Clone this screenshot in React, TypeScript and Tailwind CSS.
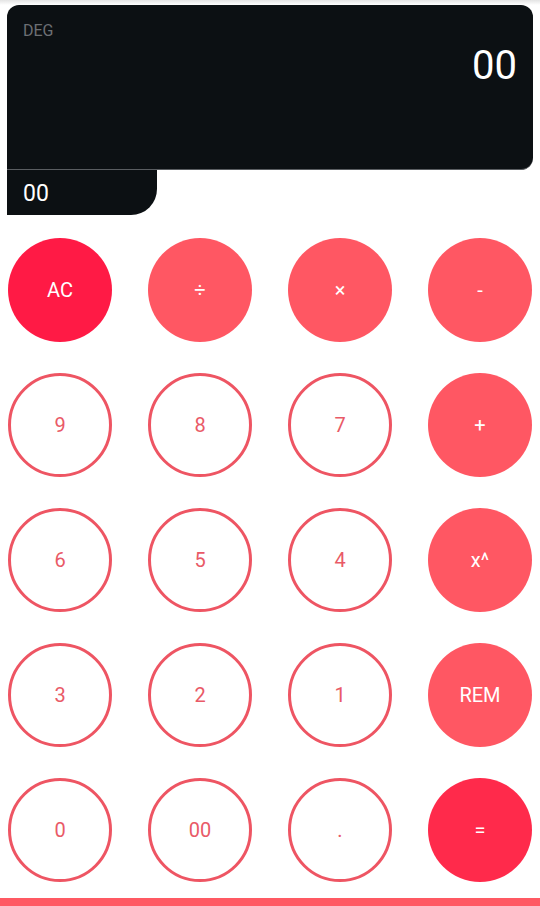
type Key = {
  label: string;
  kind: "clear" | "op" | "num" | "equals";
};

const keys: Key[] = [
  { label: "AC", kind: "clear" },
  { label: "÷", kind: "op" },
  { label: "×", kind: "op" },
  { label: "-", kind: "op" },
  { label: "9", kind: "num" },
  { label: "8", kind: "num" },
  { label: "7", kind: "num" },
  { label: "+", kind: "op" },
  { label: "6", kind: "num" },
  { label: "5", kind: "num" },
  { label: "4", kind: "num" },
  { label: "x^", kind: "op" },
  { label: "3", kind: "num" },
  { label: "2", kind: "num" },
  { label: "1", kind: "num" },
  { label: "REM", kind: "op" },
  { label: "0", kind: "num" },
  { label: "00", kind: "num" },
  { label: ".", kind: "num" },
  { label: "=", kind: "equals" },
];

const keyStyles: Record<Key["kind"], string> = {
  clear: "bg-[#ff1a45] text-white",
  op: "bg-[#ff5763] text-white",
  equals: "bg-[#ff2a4b] text-white",
  num: "border-[3px] border-[#ee5563] bg-white text-[#e95a67]",
};

const CalcKey = ({ label, kind }: Key) => {
  return (
    <button
      className={`flex size-[104px] items-center justify-center rounded-full text-[20px] ${keyStyles[kind]}`}
    >
      {label}
    </button>
  );
};

export default function App() {
  return (
    <div className="relative flex h-[906px] w-[540px] flex-col overflow-hidden bg-white font-['Roboto',sans-serif]">
      <div className="pointer-events-none absolute inset-x-0 top-0 h-[5px] bg-gradient-to-b from-[#e4e4e4] to-white" />

      <div className="mx-[7px] mt-[5px] flex flex-col">
        <div className="flex h-[165px] flex-col rounded-[12px] rounded-bl-none border-b border-[#5a5d61] bg-[#0c1013] px-4 pt-[16px]">
          <span className="text-[16px] leading-[20px] text-[#6c6f73]">DEG</span>
          <span className="mt-[5px] self-end text-[40px] leading-[40px] text-white">00</span>
        </div>
        <div className="flex h-[45px] w-[150px] items-center rounded-br-[26px] bg-[#0c1013] px-4 pt-[4px] text-[23px] text-white">
          00
        </div>
      </div>

      <div className="mt-[23px] grid grid-cols-[repeat(4,104px)] gap-x-9 gap-y-[31px] px-2">
        {keys.map((k) => (
          <CalcKey key={k.label} {...k} />
        ))}
      </div>

      <div className="mt-auto h-2 bg-[#ff5963]" />
    </div>
  );
}
